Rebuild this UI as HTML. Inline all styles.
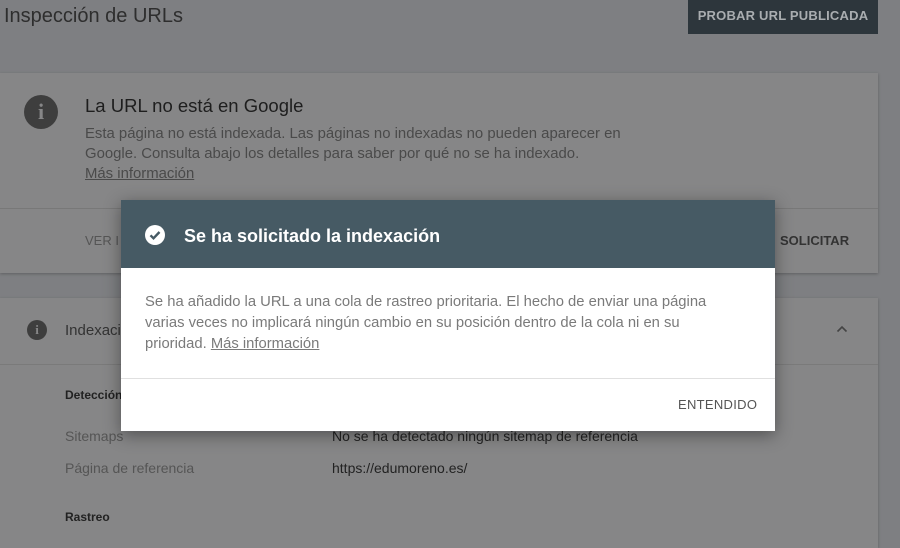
<!DOCTYPE html>
<html><head><meta charset="utf-8"><style>
body{margin:0;width:900px;height:540px;overflow:hidden;background:#7e7f82;font-family:"Liberation Sans",sans-serif;position:relative}
.a{position:absolute}
.card{background:#868687;box-shadow:0 1px 3px rgba(0,0,0,.25)}
.ic{border-radius:50%;background:#3e3e3e;color:#868687;font-weight:bold;text-align:center;font-family:"Liberation Serif",serif}
</style></head><body>
<div class="a" style="left:4px;top:5px;font-size:20px;color:#2e2e2e">Inspección de URLs</div>
<div class="a" style="left:688px;top:0;width:190px;height:34px;background:#2d363c;color:#a9adb0;font-size:13px;font-weight:bold;line-height:32px;text-align:center;letter-spacing:.2px">PROBAR URL PUBLICADA</div>

<div class="a card" style="left:0;top:73px;width:878px;height:200px">
 <div class="a ic" style="left:24px;top:22px;width:34px;height:34px;line-height:34px;font-size:22px">i</div>
 <div class="a" style="left:85px;top:22px;font-size:18.5px;color:#1e1e1e">La URL no está en Google</div>
 <div class="a" style="left:85px;top:51px;font-size:14.9px;line-height:20px;color:#4a4a4a;white-space:nowrap">Esta página no está indexada. Las páginas no indexadas no pueden aparecer en<br>Google. Consulta abajo los detalles para saber por qué no se ha indexado.<br><u>Más información</u></div>
 <div class="a" style="left:0;top:135px;width:878px;height:1px;background:#787878"></div>
 <div class="a" style="left:85px;top:160px;font-size:13px;color:#555">VER I</div>
 <div class="a" style="left:780px;top:160px;font-size:13px;font-weight:bold;color:#333">SOLICITAR</div>
</div>

<div class="a card" style="left:0;top:298px;width:878px;height:250px">
 <div class="a ic" style="left:27px;top:22px;width:20px;height:20px;line-height:20px;font-size:13px">i</div>
 <div class="a" style="left:65px;top:24px;font-size:15px;color:#333">Indexaci</div>
 <svg class="a" style="left:836px;top:27px" width="12" height="8" viewBox="0 0 12 8"><path d="M1.5 6.5L6 2l4.5 4.5" stroke="#444" stroke-width="1.6" fill="none"/></svg>
 <div class="a" style="left:0;top:66px;width:878px;height:1px;background:#7a7a7a"></div>
 <div class="a" style="left:65px;top:90px;font-size:12px;font-weight:bold;color:#222">Detección</div>
 <div class="a" style="left:65px;top:130px;font-size:14px;color:#555">Sitemaps</div>
 <div class="a" style="left:332px;top:130px;font-size:14px;color:#222">No se ha detectado ningún sitemap de referencia</div>
 <div class="a" style="left:65px;top:162px;font-size:14px;color:#555">Página de referencia</div>
 <div class="a" style="left:332px;top:162px;font-size:14px;color:#222">https://edumoreno.es/</div>
 <div class="a" style="left:65px;top:212px;font-size:12px;font-weight:bold;color:#222">Rastreo</div>
</div>

<div class="a" style="left:121px;top:200px;width:654px;height:231px;background:#fff;box-shadow:0 4px 16px rgba(0,0,0,.4)">
 <div class="a" style="left:0;top:0;width:654px;height:68px;background:#465a64"></div>
 <svg class="a" style="left:24px;top:25px" width="20" height="20" viewBox="0 0 20 20"><circle cx="10" cy="10" r="10" fill="#fff"/><path d="M5.5 10.3l3 3 6-6.3" stroke="#465a64" stroke-width="2.4" fill="none"/></svg>
 <div class="a" style="left:63px;top:26px;font-size:18px;font-weight:bold;color:#fff">Se ha solicitado la indexación</div>
 <div class="a" style="left:24px;top:92px;font-size:14.8px;line-height:21px;color:#7a7a7a;white-space:nowrap">Se ha añadido la URL a una cola de rastreo prioritaria. El hecho de enviar una página<br>varias veces no implicará ningún cambio en su posición dentro de la cola ni en su<br>prioridad. <u>Más información</u></div>
 <div class="a" style="left:0;top:178px;width:654px;height:1px;background:#e0e0e0"></div>
 <div class="a" style="left:557px;top:197px;font-size:13px;color:#555;letter-spacing:.3px">ENTENDIDO</div>
</div>
</body></html>
